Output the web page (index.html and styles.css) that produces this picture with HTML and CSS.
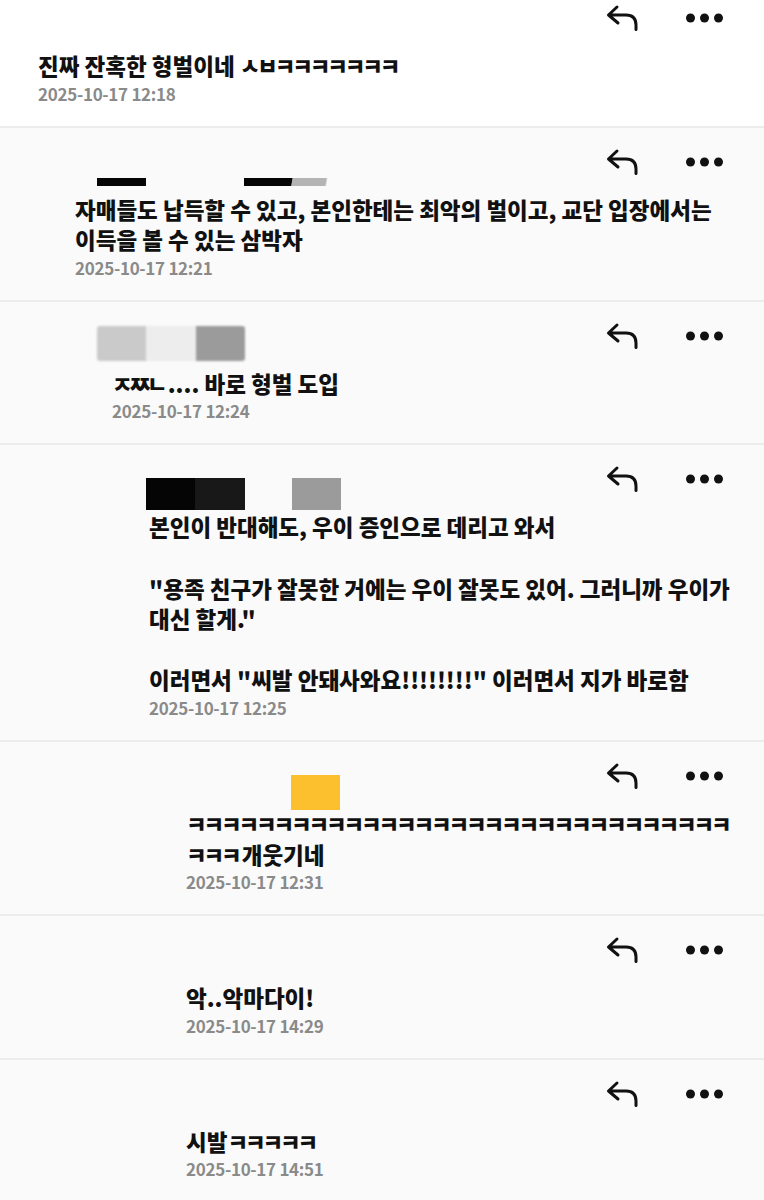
FILE: index.html
```html
<!DOCTYPE html>
<html>
  <head>
    <title>댓글</title>
    <link rel="stylesheet" href="styles.css">
  </head>
  <body>
    <div class="thread">
      <div class="comment depth-0 first">
        <div class="head">
          <div class="who"></div>
          <div class="actions">
            <svg class="reply" viewBox="0 0 32 28"><path d="M11 3 L2.5 11 L12 19 M2.5 11 H20 Q30 11 30 21 V25.5"/></svg>
            <svg class="more" viewBox="0 0 40 12"><circle cx="5.5" cy="6" r="4.5"/><circle cx="19.5" cy="6" r="4.5"/><circle cx="33.5" cy="6" r="4.5"/></svg>
          </div>
        </div>
        <div class="body">진짜 잔혹한 형벌이네 <span class="kk">ㅅㅂㅋㅋㅋㅋㅋㅋㅋ</span></div>
        <div class="date">2025-10-17 12:18</div>
      </div>

      <div class="comment depth-1">
        <div class="head">
          <div class="who who-bars">
            <span class="bar-black"></span>
            <span class="bar-fade"></span>
          </div>
          <div class="actions">
            <svg class="reply" viewBox="0 0 32 28"><path d="M11 3 L2.5 11 L12 19 M2.5 11 H20 Q30 11 30 21 V25.5"/></svg>
            <svg class="more" viewBox="0 0 40 12"><circle cx="5.5" cy="6" r="4.5"/><circle cx="19.5" cy="6" r="4.5"/><circle cx="33.5" cy="6" r="4.5"/></svg>
          </div>
        </div>
        <div class="body">자매들도 납득할 수 있고, 본인한테는 최악의 벌이고, 교단 입장에서는 이득을 볼 수 있는 삼박자</div>
        <div class="date">2025-10-17 12:21</div>
      </div>

      <div class="comment depth-2">
        <div class="head">
          <div class="who who-blur">
            <span class="blk light"></span><span class="blk pale"></span><span class="blk mid"></span>
          </div>
          <div class="actions">
            <svg class="reply" viewBox="0 0 32 28"><path d="M11 3 L2.5 11 L12 19 M2.5 11 H20 Q30 11 30 21 V25.5"/></svg>
            <svg class="more" viewBox="0 0 40 12"><circle cx="5.5" cy="6" r="4.5"/><circle cx="19.5" cy="6" r="4.5"/><circle cx="33.5" cy="6" r="4.5"/></svg>
          </div>
        </div>
        <div class="body"><span class="kk">ㅈㅉㄴ</span>.... 바로 형벌 도입</div>
        <div class="date">2025-10-17 12:24</div>
      </div>

      <div class="comment depth-3">
        <div class="head">
          <div class="who who-dark">
            <span class="blk black"></span><span class="blk ink"></span><span class="blk mid gap"></span>
          </div>
          <div class="actions">
            <svg class="reply" viewBox="0 0 32 28"><path d="M11 3 L2.5 11 L12 19 M2.5 11 H20 Q30 11 30 21 V25.5"/></svg>
            <svg class="more" viewBox="0 0 40 12"><circle cx="5.5" cy="6" r="4.5"/><circle cx="19.5" cy="6" r="4.5"/><circle cx="33.5" cy="6" r="4.5"/></svg>
          </div>
        </div>
        <div class="body">본인이 반대해도, 우이 증인으로 데리고 와서<br><br>"용족 친구가 잘못한 거에는 우이 잘못도 있어. 그러니까 우이가 대신 할게."<br><br>이러면서 "씨발 안돼사와요!!!!!!!!" 이러면서 지가 바로함</div>
        <div class="date">2025-10-17 12:25</div>
      </div>

      <div class="comment depth-4">
        <div class="head">
          <div class="who who-gold">
            <span class="blk gold"></span>
          </div>
          <div class="actions">
            <svg class="reply" viewBox="0 0 32 28"><path d="M11 3 L2.5 11 L12 19 M2.5 11 H20 Q30 11 30 21 V25.5"/></svg>
            <svg class="more" viewBox="0 0 40 12"><circle cx="5.5" cy="6" r="4.5"/><circle cx="19.5" cy="6" r="4.5"/><circle cx="33.5" cy="6" r="4.5"/></svg>
          </div>
        </div>
        <div class="body"><span class="kk">ㅋㅋㅋㅋㅋㅋㅋㅋㅋㅋㅋㅋㅋㅋㅋㅋㅋㅋㅋㅋㅋㅋㅋㅋㅋㅋㅋㅋㅋㅋㅋ</span><span class="kk">ㅋㅋㅋ</span>개웃기네</div>
        <div class="date">2025-10-17 12:31</div>
      </div>

      <div class="comment depth-4">
        <div class="head">
          <div class="who"></div>
          <div class="actions">
            <svg class="reply" viewBox="0 0 32 28"><path d="M11 3 L2.5 11 L12 19 M2.5 11 H20 Q30 11 30 21 V25.5"/></svg>
            <svg class="more" viewBox="0 0 40 12"><circle cx="5.5" cy="6" r="4.5"/><circle cx="19.5" cy="6" r="4.5"/><circle cx="33.5" cy="6" r="4.5"/></svg>
          </div>
        </div>
        <div class="body">악..악마다이!</div>
        <div class="date">2025-10-17 14:29</div>
      </div>

      <div class="comment depth-4">
        <div class="head">
          <div class="who"></div>
          <div class="actions">
            <svg class="reply" viewBox="0 0 32 28"><path d="M11 3 L2.5 11 L12 19 M2.5 11 H20 Q30 11 30 21 V25.5"/></svg>
            <svg class="more" viewBox="0 0 40 12"><circle cx="5.5" cy="6" r="4.5"/><circle cx="19.5" cy="6" r="4.5"/><circle cx="33.5" cy="6" r="4.5"/></svg>
          </div>
        </div>
        <div class="body">시발<span class="kk">ㅋㅋㅋㅋㅋ</span></div>
        <div class="date">2025-10-17 14:51</div>
      </div>
    </div>
  </body>
</html>
```

FILE: styles.css
```css
body {
  margin: 0;
  background: #fafafa;
  font-family: "Noto Sans CJK KR", "Noto Sans", sans-serif;
  color: #111;
}

/* page is scrolled a little, first row is cut at the top */
.thread {
  margin-top: -16px;
}

.comment {
  display: flex;
  flex-direction: column;
  padding-right: 28px;
  padding-bottom: 21px;
  border-top: 2px solid #ececec;
  background: #fafafa;
}

.comment.first {
  border-top: none;
  background: #fff;
}

.depth-0 { padding-left: 38px; }
.depth-1 { padding-left: 75px; }
.depth-2 { padding-left: 112px; }
.depth-3 { padding-left: 149px; }
.depth-4 { padding-left: 186px; }

.head {
  display: flex;
  align-items: flex-end;
  height: 66px;
}

.who {
  flex: 1;
  display: flex;
}

.actions {
  align-self: center;
  display: flex;
  align-items: center;
  gap: 47px;
  margin-top: 2px;
  margin-right: 11px;
}

.reply {
  width: 32px;
  height: 28px;
  fill: none;
  stroke: #111;
  stroke-width: 3;
  stroke-linecap: round;
  stroke-linejoin: round;
}

.more {
  width: 40px;
  height: 12px;
  fill: #111;
}

/* redacted names */
.who-bars {
  margin-bottom: 8px;
  height: 8px;
  margin-left: 22px;
}

.bar-black {
  width: 49px;
  background: #050505;
}

.bar-fade {
  width: 86px;
  margin-left: 98px;
  background: linear-gradient(100deg, #050505 0, #050505 55%, #b4b4b4 56%, #b4b4b4 94%, transparent 96%);
}

.blk {
  display: block;
  width: 49px;
  height: 100%;
}

.who-blur {
  height: 35px;
  margin-bottom: 7px;
  margin-left: -15px;
  filter: blur(1px);
}

.who-dark {
  height: 32px;
  margin-bottom: 1px;
  margin-left: -3px;
}

.who-gold {
  height: 35px;
  margin-bottom: -2px;
  margin-left: 105px;
}

.light { background: #cacaca; border-radius: 3px 0 0 3px; }
.pale { background: #ededed; width: 50px; }
.mid { background: #9b9b9b; border-radius: 0 3px 3px 0; }
.black { background: #050505; }
.ink { background: #181818; width: 50px; }
.mid.gap { margin-left: 47px; border-radius: 0; }
.gold { background: #fcc02e; }

.body {
  font-size: 22.5px;
  font-weight: 900;
  line-height: 30.6px;
  color: #111;
}

/* compatibility jamo: tight advance like the app font */
.kk {
  letter-spacing: -3.2px;
  margin-right: 3.2px;
}

.date {
  margin-top: 2px;
  font-size: 17px;
  font-weight: 700;
  line-height: 22px;
  letter-spacing: -0.3px;
  color: #8a8a8a;
}
```
